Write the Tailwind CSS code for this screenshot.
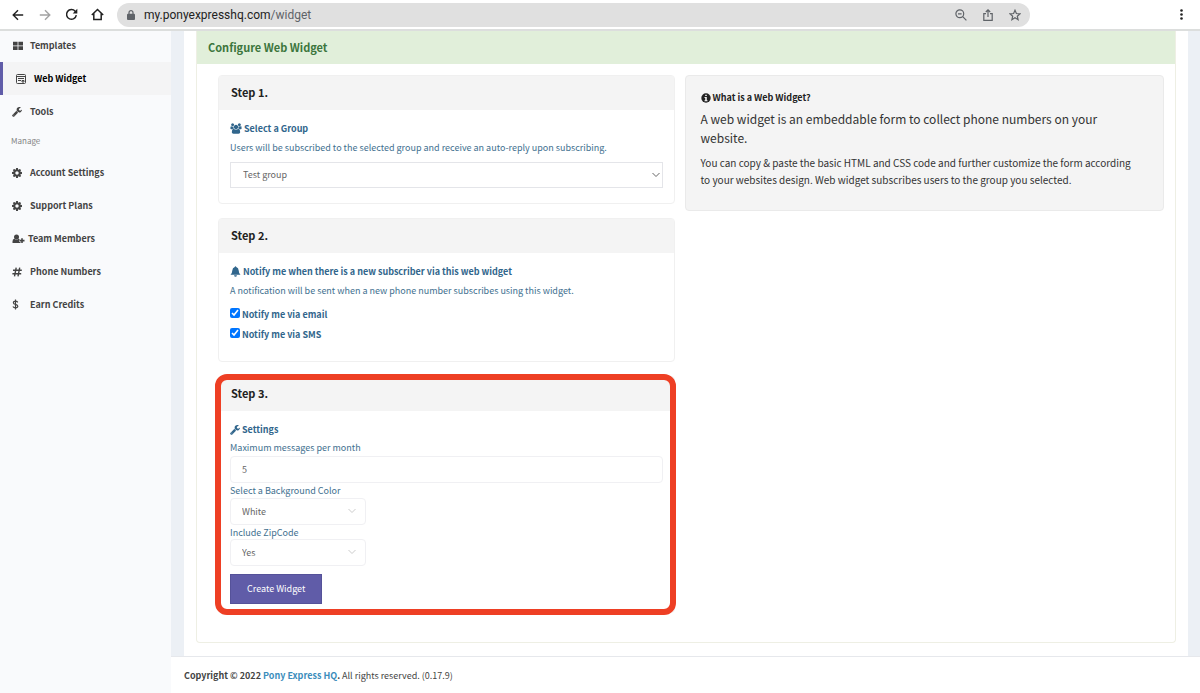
<!DOCTYPE html>
<html lang="en">
<head>
  <meta charset="UTF-8">
  <meta name="viewport" content="width=device-width, initial-scale=1.0">
  <title>Web Widget - Pony Express HQ</title>
  <script src="https://cdn.jsdelivr.net/npm/@tailwindcss/browser@4"></script>
</head>
<body class="bg-white text-[#333] font-['Noto_Sans_CJK_SC',sans-serif] text-[9px] leading-4 min-h-screen flex flex-col">

  <!-- shared icons -->
  <svg class="hidden">
    <symbol id="cog" viewBox="0 128 1536 1536"><path d="M1024 896q0-106-75-181t-181-75-181 75-75 181 75 181 181 75 181-75 75-181zm512-109v222q0 12-8 23t-20 13l-185 28q-19 54-39 91 35 50 107 138 10 12 10 25t-9 23q-27 37-99 108t-94 71q-12 0-26-9l-138-108q-44 23-91 38-16 136-29 186-7 28-36 28h-222q-14 0-24.500-8.500t-11.500-21.500l-28-184q-49-16-90-37l-141 107q-10 9-25 9-14 0-25-11-126-114-165-168-7-10-7-23 0-12 8-23 15-21 51-66.500t54-70.500q-27-50-41-99l-183-27q-13-2-21-12.500t-8-23.500v-222q0-12 8-23t19-13l186-28q14-46 39-92-40-57-107-138-10-12-10-24 0-10 9-23 26-36 98.500-107.500t94.500-71.500q13 0 26 10l138 107q44-23 91-38 16-136 29-186 7-28 36-28h222q14 0 24.500 8.500t11.500 21.500l28 184q49 16 90 37l142-107q9-9 24-9 13 0 25 10 129 119 165 170 7 8 7 22 0 12-8 23-15 21-51 66.500t-54 70.500q26 50 41 98l183 28q13 2 21 12.500t8 23.500z"/></symbol>
    <symbol id="wrench" viewBox="64 128 1664 1664"><path d="M448 1472q0-26-19-45t-45-19-45 19-19 45 19 45 45 19 45-19 19-45zm644-420l-682 682q-37 37-90 37-52 0-91-37l-106-108q-38-36-38-90 0-53 38-91l681-681q39 98 114.500 173.500t173.500 114.500zm634-435q0 39-23 106-47 134-164.500 217.500t-258.500 83.500q-185 0-316.500-131.500t-131.500-316.500 131.500-316.500 316.500-131.500q58 0 121.500 16.500t107.500 46.500q16 11 16 28t-16 28l-293 169v224l193 107q5-3 79-48.500t135.500-81 70.500-35.500q15 0 23.500 10t8.500 25z"/></symbol>
    <symbol id="chevron" viewBox="0 0 10 10"><path d="M1.500 3l3.500 3.500L8.500 3" fill="none" stroke="currentColor"/></symbol>
  </svg>

  <header class="h-[31px] shrink-0 border-b-2 border-[#dcdedd] flex items-center pl-3 pr-3 text-[#222]">
    <button class="mr-[15px]" aria-label="Back"><svg class="size-3" viewBox="0 0 12 12" fill="none" stroke="currentColor" stroke-width="1.400"><path d="M11.200 6H1.200M6 1.200L1.200 6 6 10.800"/></svg></button>
    <button class="mr-[14px] text-[#a3a3a3]" aria-label="Forward"><svg class="size-3" viewBox="0 0 12 12" fill="none" stroke="currentColor" stroke-width="1.400"><path d="M.8 6h10M6 1.200L10.800 6 6 10.800"/></svg></button>
    <button class="mr-[13px]" aria-label="Reload"><svg class="size-[13px]" viewBox="0 0 13 13" fill="none" stroke="currentColor" stroke-width="1.500"><path d="M11.300 7.200A4.900 4.900 0 1 1 10.200 3.200L11.300 4.400"/><path d="M12.300.8v4.600H7.700z" fill="currentColor" stroke="none"/></svg></button>
    <button class="mr-[13px]" aria-label="Home"><svg class="size-[13px]" viewBox="0 0 13 13" fill="none" stroke="currentColor" stroke-width="1.500"><path d="M.8 7L6.500 1.500 12.200 7M2.800 5.500v6h7.400v-6"/></svg></button>
    <div class="flex-1 h-6 rounded-full bg-[#e0e0e0] flex items-center pl-[10px] pr-[9px] text-[#5f6368]">
      <svg class="w-2 h-[10px] mr-[9px]" viewBox="0 0 8 10"><rect y="3.800" width="8" height="6.200" rx="1" fill="currentColor"/><path d="M2 4V2.700a2 2 0 0 1 4 0V4" fill="none" stroke="currentColor" stroke-width="1.200"/></svg>
      <div class="flex-1 font-[Roboto,sans-serif] text-[12px]"><span class="text-[#222]">my.ponyexpresshq.com</span>/widget</div>
      <button class="mr-4" aria-label="Zoom"><svg class="size-3" viewBox="0 0 12 12" fill="none" stroke="currentColor" stroke-width="1.200"><circle cx="4.800" cy="4.800" r="3.900"/><path d="M7.700 7.700l3.700 3.700M3 4.800h3.600"/></svg></button>
      <button class="mr-4" aria-label="Share"><svg class="w-[10px] h-3" viewBox="0 0 10 12" fill="none" stroke="currentColor" stroke-width="1.200"><path d="M3 4.600H.8v6.700h8.400V4.600H7M5 8V1M2.800 3L5 .9 7.200 3"/></svg></button>
      <button aria-label="Bookmark"><svg class="size-3" viewBox="0 0 12 12" fill="none" stroke="currentColor" stroke-width="1.200"><path d="M6 1.200l1.400 3.300 3.600.3-2.700 2.400.8 3.500L6 8.800l-3.100 1.900.8-3.500L1 4.800l3.600-.3z"/></svg></button>
    </div>
    <button class="ml-[150px] mr-[5px]" aria-label="Menu"><svg class="w-[3px] h-[11px]" viewBox="0 0 3 11" fill="currentColor"><circle cx="1.500" cy="1.500" r="1.300"/><circle cx="1.500" cy="5.500" r="1.300"/><circle cx="1.500" cy="9.500" r="1.300"/></svg></button>
  </header>

  <div class="flex flex-1">
    <nav class="w-[171px] shrink-0 bg-[#f9fafc] font-bold text-[#444]">
      <a href="#" class="h-[31px] pb-[2px] pl-3 flex items-center"><svg class="w-3 h-[10px] mr-[6px]" viewBox="0 0 12 10" fill="currentColor"><path d="M1 .8h4.600v3.700H1zM6.400.8H11v3.700H6.400zM1 5.300h4.600V9H1zM6.400 5.300H11V9H6.400z"/></svg>Templates</a>
      <a href="#" class="h-[33px] pl-3 flex items-center bg-[#f4f4f5] border-l-3 border-[#605ca8] text-black"><svg class="size-3 mr-[7px] text-[#444]" viewBox="0 0 12 12" fill="none" stroke="currentColor"><rect x="1.500" y="1.500" width="9" height="9" rx="1"/><path d="M1.500 3.500h9M3 5.500h6M3 7.500h3M7 7.500h2v1.500H7z"/></svg>Web Widget</a>
      <a href="#" class="h-[33px] pl-3 flex items-center"><svg class="size-[10px] mr-2" fill="currentColor"><use href="#wrench"/></svg>Tools</a>
      <div class="h-7 pb-[2px] pl-[11px] flex items-center font-normal text-[8px] text-[#848484]">Manage</div>
      <a href="#" class="h-[33px] pl-3 flex items-center"><svg class="size-[10px] mr-2" fill="currentColor"><use href="#cog"/></svg>Account Settings</a>
      <a href="#" class="h-[33px] pl-3 flex items-center"><svg class="size-[10px] mr-2" fill="currentColor"><use href="#cog"/></svg>Support Plans</a>
      <a href="#" class="h-[33px] pl-3 flex items-center"><svg class="w-[13px] h-[10px] mr-[3px]" viewBox="0 0 13 10" fill="currentColor"><circle cx="4.500" cy="3" r="2.500"/><path d="M0.500 9V7.500Q.5 5 2.400 4.700q2.100 1.800 4.200 0Q7.500 5 7.800 6H7.200v2H8.500v1zM9.200 4.200h1.600v1.600h1.700v1.600h-1.700V9H9.200V7.400H7.600V5.800h1.600z"/></svg>Team Members</a>
      <a href="#" class="h-[33px] pl-3 flex items-center"><svg class="size-[10px] mr-2" viewBox="0 0 10 10" fill="none" stroke="currentColor" stroke-width="1.400"><path d="M4.200.6L2.500 9.400M7.700.6L6 9.400M1 3.300h8.800M.4 6.700h8.800"/></svg>Phone Numbers</a>
      <a href="#" class="h-[33px] pl-3 flex items-center"><svg class="w-[7px] h-[11px] mr-[11px]" viewBox="0 0 7 11" fill="none" stroke="currentColor" stroke-width="1.200"><path d="M5.800 3.300Q5 2.200 3.400 2.200 1.400 2.200 1.400 3.700T3.500 5.400Q5.800 5.900 5.800 7.300T3.500 8.800Q1.700 8.800.9 7.500M3.500.4v10.200"/></svg>Earn Credits</a>
    </nav>

    <div class="flex-1 min-w-0 flex flex-col">
      <main class="flex-1 bg-[#ecf0f5] pl-[13px] pr-3">
        <div class="bg-white h-full px-3 pb-[13px]">
          <div class="border border-t-0 border-[#eeefe4] rounded-b-sm pb-[29px]">
            <h1 class="h-[33px] bg-[#e1efda] text-[#3c763d] text-[11px] font-bold px-[11px] pb-[2px] flex items-center">Configure Web Widget</h1>

            <div class="grid grid-cols-[457fr_480fr] gap-[10px] items-start pl-[21px] pr-[11px] pt-[11px]">
              <div class="text-[#42708f]">
                <section class="border border-[#f0f0f0] rounded-sm mb-[14px]">
                  <h2 class="h-[34px] bg-[#f4f4f4] text-[#222] text-[11px] font-bold px-3 pb-[2px] flex items-center">Step 1.</h2>
                  <div class="px-[11px] pt-[9px] pb-[15px]">
                    <h3 class="font-bold text-[#31668c] h-[19px] flex items-center"><svg class="w-3 h-[11px] mr-[2px]" viewBox="-64 0 2048 1792" fill="currentColor"><path d="M593 896q-162 5-265 128H194q-82 0-138-40.500T0 865q0-353 124-353 6 0 43.500 21t97.500 42.500T384 597q67 0 133-23-5 37-5 66 0 159 81 288zm1071 637q0 120-73 189.500t-194 69.500H523q-121 0-194-69.500T256 1533q0-53 3.500-103.500t14-109T300 1212t43-97.500 62-81 85.500-53.500T602 960q10 0 43 21.500t73 48 107 48 135 21.500 135-21.500 107-48 73-48 43-21.500q61 0 111.500 20t85.500 53.500 62 81 43 97.500 26.500 108.500 14 109 3.500 103.500zM640 256q0 106-75 181t-181 75-181-75-75-181 75-181T384 0t181 75 75 181zm704 384q0 159-112.500 271.500T960 1024 688.500 911.500 576 640t112.500-271.500T960 256t271.500 112.500T1344 640zm576 225q0 78-56 118.500t-138 40.500h-134q-103-123-265-128 81-129 81-288 0-29-5-66 66 23 133 23 59 0 119-21.500t97.500-42.500 43.500-21q124 0 124 353zm-128-609q0 106-75 181t-181 75-181-75-75-181 75-181 181-75 181 75 75 181z"/></svg>Select a Group</h3>
                    <label for="group" class="block h-6 leading-[19px]">Users will be subscribed to the selected group and receive an auto-reply upon subscribing.</label>
                    <div class="relative">
                      <select id="group" class="appearance-none block w-full h-[26px] border border-[#e4e5e9] bg-white px-3 text-[#666]"><option>Test group</option></select>
                      <svg class="absolute right-[2px] top-2 size-[10px] text-[#666] pointer-events-none"><use href="#chevron"/></svg>
                    </div>
                  </div>
                </section>

                <section class="border border-[#f0f0f0] rounded-sm mb-[14px]">
                  <h2 class="h-[34px] bg-[#f4f4f4] text-[#222] text-[11px] font-bold px-3 pb-[2px] flex items-center">Step 2.</h2>
                  <div class="px-[11px] pt-[9px] pb-4">
                    <h3 class="font-bold text-[#31668c] h-[19px] flex items-center"><svg class="size-[11px] mr-[2px]" viewBox="0 0 11 11" fill="currentColor"><path d="M5.500.2q.7 0 .7.800Q8.600 1.600 8.700 4.400 8.800 7.200 10.500 8.800H.5Q2.200 7.200 2.300 4.400 2.400 1.600 4.800 1q0-.8.700-.8zM4 9.300h3q-.3 1.500-1.500 1.500T4 9.300z"/></svg>Notify me when there is a new subscriber via this web widget</h3>
                    <p class="leading-[19px] mb-[5px]">A notification will be sent when a new phone number subscribes using this widget.</p>
                    <label class="flex items-center h-5 font-bold text-[#31668c]"><input type="checkbox" checked class="size-[10px] mr-[2px] mb-1">Notify me via email</label>
                    <label class="flex items-center h-5 font-bold text-[#31668c]"><input type="checkbox" checked class="size-[10px] mr-[2px] mb-1">Notify me via SMS</label>
                  </div>
                </section>

                <section class="relative border border-[#f0f0f0] rounded-sm">
                  <h2 class="h-[34px] bg-[#f4f4f4] text-[#222] text-[11px] font-bold px-3 pb-[2px] flex items-center">Step 3.</h2>
                  <form class="px-[11px] pt-[9px] pb-2">
                    <h3 class="font-bold text-[#31668c] h-[19px] flex items-center"><svg class="size-[10px] mr-[2px]" fill="currentColor"><use href="#wrench"/></svg>Settings</h3>
                    <label for="max" class="block h-[17px] leading-[18px]">Maximum messages per month</label>
                    <input id="max" type="text" value="5" class="block w-full h-[27px] border border-[#f0f0f3] rounded-sm px-[11px] text-[#666]">
                    <label for="color" class="block h-[15px] leading-[15px]">Select a Background Color</label>
                    <div class="relative w-[136px]">
                      <select id="color" class="appearance-none block w-full h-[27px] border border-[#f0f0f3] rounded-sm bg-white px-[11px] text-[#666]"><option>White</option></select>
                      <svg class="absolute right-[9px] top-2 size-[10px] text-[#ccc] pointer-events-none"><use href="#chevron"/></svg>
                    </div>
                    <label for="zip" class="block h-[14px] leading-[15px]">Include ZipCode</label>
                    <div class="relative w-[136px]">
                      <select id="zip" class="appearance-none block w-full h-[27px] border border-[#f0f0f3] rounded-sm bg-white px-[11px] text-[#666]"><option>Yes</option></select>
                      <svg class="absolute right-[9px] top-2 size-[10px] text-[#ccc] pointer-events-none"><use href="#chevron"/></svg>
                    </div>
                    <button type="button" class="block mt-2 h-[30px] px-4 bg-[#605ca8] border border-[#555299] text-white">Create Widget</button>
                  </form>
                  <!-- highlight ring -->
                  <div class="absolute -left-1 -right-[2px] -inset-y-[3px] border-6 border-[#ee3f24] rounded-xl pointer-events-none"></div>
                </section>
              </div>

              <aside class="bg-[#f4f4f4] border border-[#eaeaea] rounded-sm pl-[15px] pr-6 pt-[14px] pb-[22px]">
                <h3 class="font-bold text-[#222] flex items-center"><svg class="size-[10px] mr-[2px]" viewBox="0 0 10 10"><circle cx="5" cy="5" r="4.700" fill="currentColor"/><path d="M4.200 1.700h1.600v1.400H4.200zM3.500 4h2.300v3.200h.7v1h-3v-1h.7V5h-.7z" fill="#f4f4f4"/></svg>What is a Web Widget?</h3>
                <p class="text-[12px] leading-[19px] mt-[3px] mb-[7px]">A web widget is an embeddable form to collect phone numbers on your website.</p>
                <p class="text-[10px] leading-[17px]">You can copy &amp; paste the basic HTML and CSS code and further customize the form according to your websites design. Web widget subscribes users to the group you selected.</p>
              </aside>
            </div>
          </div>
        </div>
      </main>
      <footer class="h-[37px] bg-white border-t border-[#e6e8ec] pl-[13px] pt-[11px] text-[#444]"><b>Copyright © 2022 <a href="#" class="text-[#3c8dbc]">Pony Express HQ</a>.</b> All rights reserved. (0.17.9)</footer>
    </div>
  </div>
</body>
</html>
